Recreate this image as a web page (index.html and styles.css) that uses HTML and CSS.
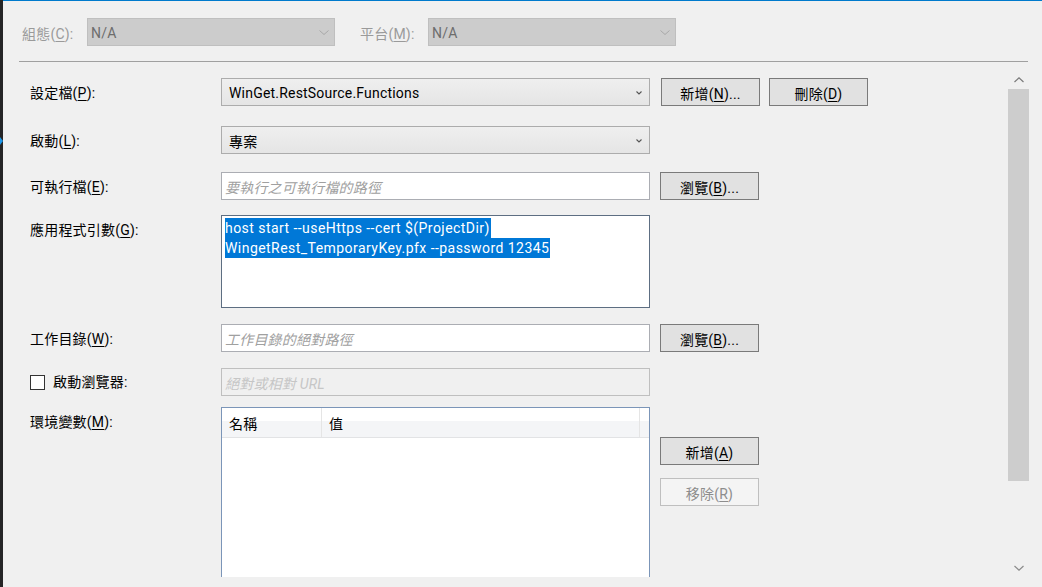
FILE: index.html
```html
<!doctype html>
<html lang="zh-Hant">
  <head>
    <meta charset="UTF-8" />
    <meta name="viewport" content="width=device-width, initial-scale=1.0" />
    <title>偵錯屬性</title>
    <link rel="stylesheet" href="styles.css">
  </head>
  <body>
    <div class="window">
      <div class="edge"><span class="edge-mark"></span></div>

      <div class="page">
        <!-- configuration / platform selectors (disabled) -->
        <div class="target-bar">
          <span class="bar-label">組態(<u>C</u>):</span>
          <div class="combo combo-off">
            <span>N/A</span>
            <svg class="chevron-off" width="10" height="5" viewBox="0 0 10 5"><polyline points="0.5,0.5 5,4.5 9.5,0.5" fill="none" stroke="#a8a8a8" stroke-width="1"/></svg>
          </div>
          <span class="bar-label platform">平台(<u>M</u>):</span>
          <div class="combo combo-off">
            <span>N/A</span>
            <svg class="chevron-off" width="10" height="5" viewBox="0 0 10 5"><polyline points="0.5,0.5 5,4.5 9.5,0.5" fill="none" stroke="#a8a8a8" stroke-width="1"/></svg>
          </div>
        </div>
        <hr class="divider" />

        <div class="content">
          <div class="viewport">
            <div class="row">
              <label class="field-label">設定檔(<u>P</u>):</label>
              <div class="field combo">
                <span>WinGet.RestSource.Functions</span>
                <svg width="6" height="4" viewBox="0 0 6 4"><polyline points="0.5,0.5 3,3 5.5,0.5" fill="none" stroke="#555" stroke-width="1.1"/></svg>
              </div>
              <div class="actions profile-actions">
                <button class="button">新增(<u>N</u>)...</button>
                <button class="button">刪除(<u>D</u>)</button>
              </div>
            </div>

            <div class="row gap-20">
              <label class="field-label">啟動(<u>L</u>):</label>
              <div class="field combo">
                <span>專案</span>
                <svg width="6" height="4" viewBox="0 0 6 4"><polyline points="0.5,0.5 3,3 5.5,0.5" fill="none" stroke="#555" stroke-width="1.1"/></svg>
              </div>
            </div>

            <div class="row gap-18">
              <label class="field-label">可執行檔(<u>E</u>):</label>
              <div class="field textbox"><span class="placeholder">要執行之可執行檔的路徑</span></div>
              <div class="actions">
                <button class="button">瀏覽(<u>B</u>)...</button>
              </div>
            </div>

            <div class="row gap-15">
              <label class="field-label">應用程式引數(<u>G</u>):</label>
              <div class="field args">
                <div class="args-line"><span>host start --useHttps --cert $(ProjectDir)</span></div>
                <div class="args-line"><span>WingetRest_TemporaryKey.pfx --password 12345</span></div>
              </div>
            </div>

            <div class="row gap-16">
              <label class="field-label">工作目錄(<u>W</u>):</label>
              <div class="field textbox"><span class="placeholder">工作目錄的絕對路徑</span></div>
              <div class="actions">
                <button class="button">瀏覽(<u>B</u>)...</button>
              </div>
            </div>

            <div class="row gap-16">
              <label class="field-label check-label"><span class="checkbox"></span>啟動瀏覽器:</label>
              <div class="field textbox textbox-off"><span class="placeholder">絕對或相對 URL</span></div>
            </div>

            <div class="row gap-11">
              <label class="field-label">環境變數(<u>M</u>):</label>
              <div class="field list">
                <div class="list-head">
                  <span class="col col-name">名稱</span>
                  <span class="col col-value">值</span>
                  <span class="col col-fill"></span>
                </div>
              </div>
              <div class="actions stack">
                <button class="button">新增(<u>A</u>)</button>
                <button class="button button-off" disabled>移除(<u>R</u>)</button>
              </div>
            </div>
          </div>

          <!-- vertical scroll bar -->
          <div class="scrollbar">
            <div class="scroll-arrow">
              <svg width="10" height="6" viewBox="0 0 10 6"><polyline points="0.5,5 5,0.8 9.5,5" fill="none" stroke="#7a7a7a" stroke-width="1.2"/></svg>
            </div>
            <div class="scroll-thumb"></div>
            <div class="scroll-track"></div>
            <div class="scroll-arrow">
              <svg width="10" height="6" viewBox="0 0 10 6"><polyline points="0.5,1 5,5.2 9.5,1" fill="none" stroke="#8a8a8a" stroke-width="1.2"/></svg>
            </div>
          </div>
        </div>
      </div>
    </div>
  </body>
</html>
```

FILE: styles.css
```css
/* Base */
* {
  box-sizing: border-box;
}

body {
  margin: 0;
  background-color: #f0f0f0;
  font-family: "Segoe UI", Roboto, "Noto Sans CJK TC", sans-serif;
  font-size: 14px;
  letter-spacing: 0.2px;
  color: #000;
  overflow: hidden;
}

u {
  text-underline-offset: 2px;
}

.window {
  display: flex;
  height: 587px;
}

/* dark editor edge on the left */
.edge {
  width: 3px;
  flex: none;
  background-color: #252526;
  padding-top: 137px;
}

.edge-mark {
  display: block;
  width: 0;
  height: 0;
  border-top: 4px solid transparent;
  border-bottom: 4px solid transparent;
  border-left: 3px solid #1c97ea;
}

.page {
  flex: 1;
  min-width: 0;
  display: flex;
  flex-direction: column;
  border-top: 1px solid #007acc;
}

/* Top selectors */
.target-bar {
  display: flex;
  align-items: center;
  padding: 17px 0 15px 19px;
}

.bar-label {
  width: 65px;
  padding-top: 1px;
  color: #9a9a9a;
}

.bar-label.platform {
  width: 68px;
  margin-left: 25px;
}

.divider {
  height: 1px;
  margin: 0 14px 0 16px;
  border: 0;
  background-color: #a0a0a0;
}

/* Combo boxes */
.combo {
  display: flex;
  align-items: center;
  justify-content: space-between;
  height: 28px;
  padding: 1px 7px 0;
  border: 1px solid #acacac;
  background: linear-gradient(#efefef, #e5e5e5);
}

.combo-off {
  width: 248px;
  padding: 1px 5px 0 3px;
  border-color: #bfbfbf;
  background: #cccccc;
  color: #6d6d6d;
}

/* Form rows */
.content {
  display: flex;
  height: 515px;
}

.viewport {
  flex: 1;
  overflow: hidden;
  padding: 16px 0 0 27px;
}

.row {
  display: flex;
  align-items: flex-start;
}

.gap-20 { margin-top: 20px; }
.gap-18 { margin-top: 18px; }
.gap-16 { margin-top: 16px; }
.gap-15 { margin-top: 15px; }
.gap-11 { margin-top: 11px; }

.field-label {
  width: 191px;
  height: 28px;
  flex: none;
  padding-top: 2px;
  line-height: 26px;
}

.check-label {
  display: flex;
  align-items: center;
  gap: 8px;
  padding-top: 0;
}

.checkbox {
  width: 15px;
  height: 15px;
  border: 1px solid #333;
  background-color: #fff;
}

.field {
  width: 429px;
  flex: none;
}

.textbox {
  display: flex;
  align-items: center;
  height: 28px;
  padding: 1px 3px 0;
  border: 1px solid #abadb3;
  background-color: #fff;
}

.placeholder {
  color: #a0a0a0;
  font-style: italic;
}

.textbox-off {
  border-color: #bfbfbf;
  background-color: #f0f0f0;
}

.textbox-off .placeholder {
  color: #c6c6c6;
}

/* Arguments box with its text selected */
.args {
  height: 93px;
  padding: 2px 3px;
  border: 1px solid #5d6e82;
  background-color: #fff;
  letter-spacing: 0.45px;
}

.args-line {
  height: 20px;
  line-height: 20px;
}

.args-line span {
  display: inline-block;
  padding-right: 1px;
  background-color: #0078d7;
  color: #fff;
}

/* Environment variable list */
.list {
  height: 200px;
  border: 1px solid #7b95b8;
  background-color: #fff;
}

.list-head {
  display: flex;
  height: 30px;
  border-bottom: 1px solid #e2e3e5;
  background: linear-gradient(#fff 0 45%, #f4f5f7 45%);
}

.col {
  display: flex;
  align-items: center;
  padding: 1px 0 0 7px;
  border-right: 1px solid #e5e5e5;
}

.col-name {
  width: 100px;
}

.col-value {
  width: 318px;
}

.col-fill {
  flex: 1;
  border-right: 0;
}

/* Buttons */
.actions {
  display: flex;
  gap: 9px;
  margin-left: 10px;
}

.profile-actions {
  margin-left: 11px;
}

.actions.stack {
  flex-direction: column;
  gap: 13px;
  padding-top: 30px;
}

.button {
  width: 99px;
  height: 28px;
  padding: 1px 0 0;
  border: 1px solid #7a7a7a;
  background-color: #e1e1e1;
  font: inherit;
  letter-spacing: inherit;
  color: #000;
}

.button-off {
  border-color: #bfbfbf;
  background-color: #f4f4f4;
  color: #8d8d8d;
}

/* Scroll bar */
.scrollbar {
  width: 21px;
  flex: none;
  margin-right: 13px;
  padding-top: 8px;
  display: flex;
  flex-direction: column;
}

.scroll-arrow {
  height: 19px;
  display: flex;
  align-items: center;
  justify-content: center;
}

.scroll-thumb {
  height: 392px;
  background-color: #cdcdcd;
}

.scroll-track {
  flex: 1;
}
```
